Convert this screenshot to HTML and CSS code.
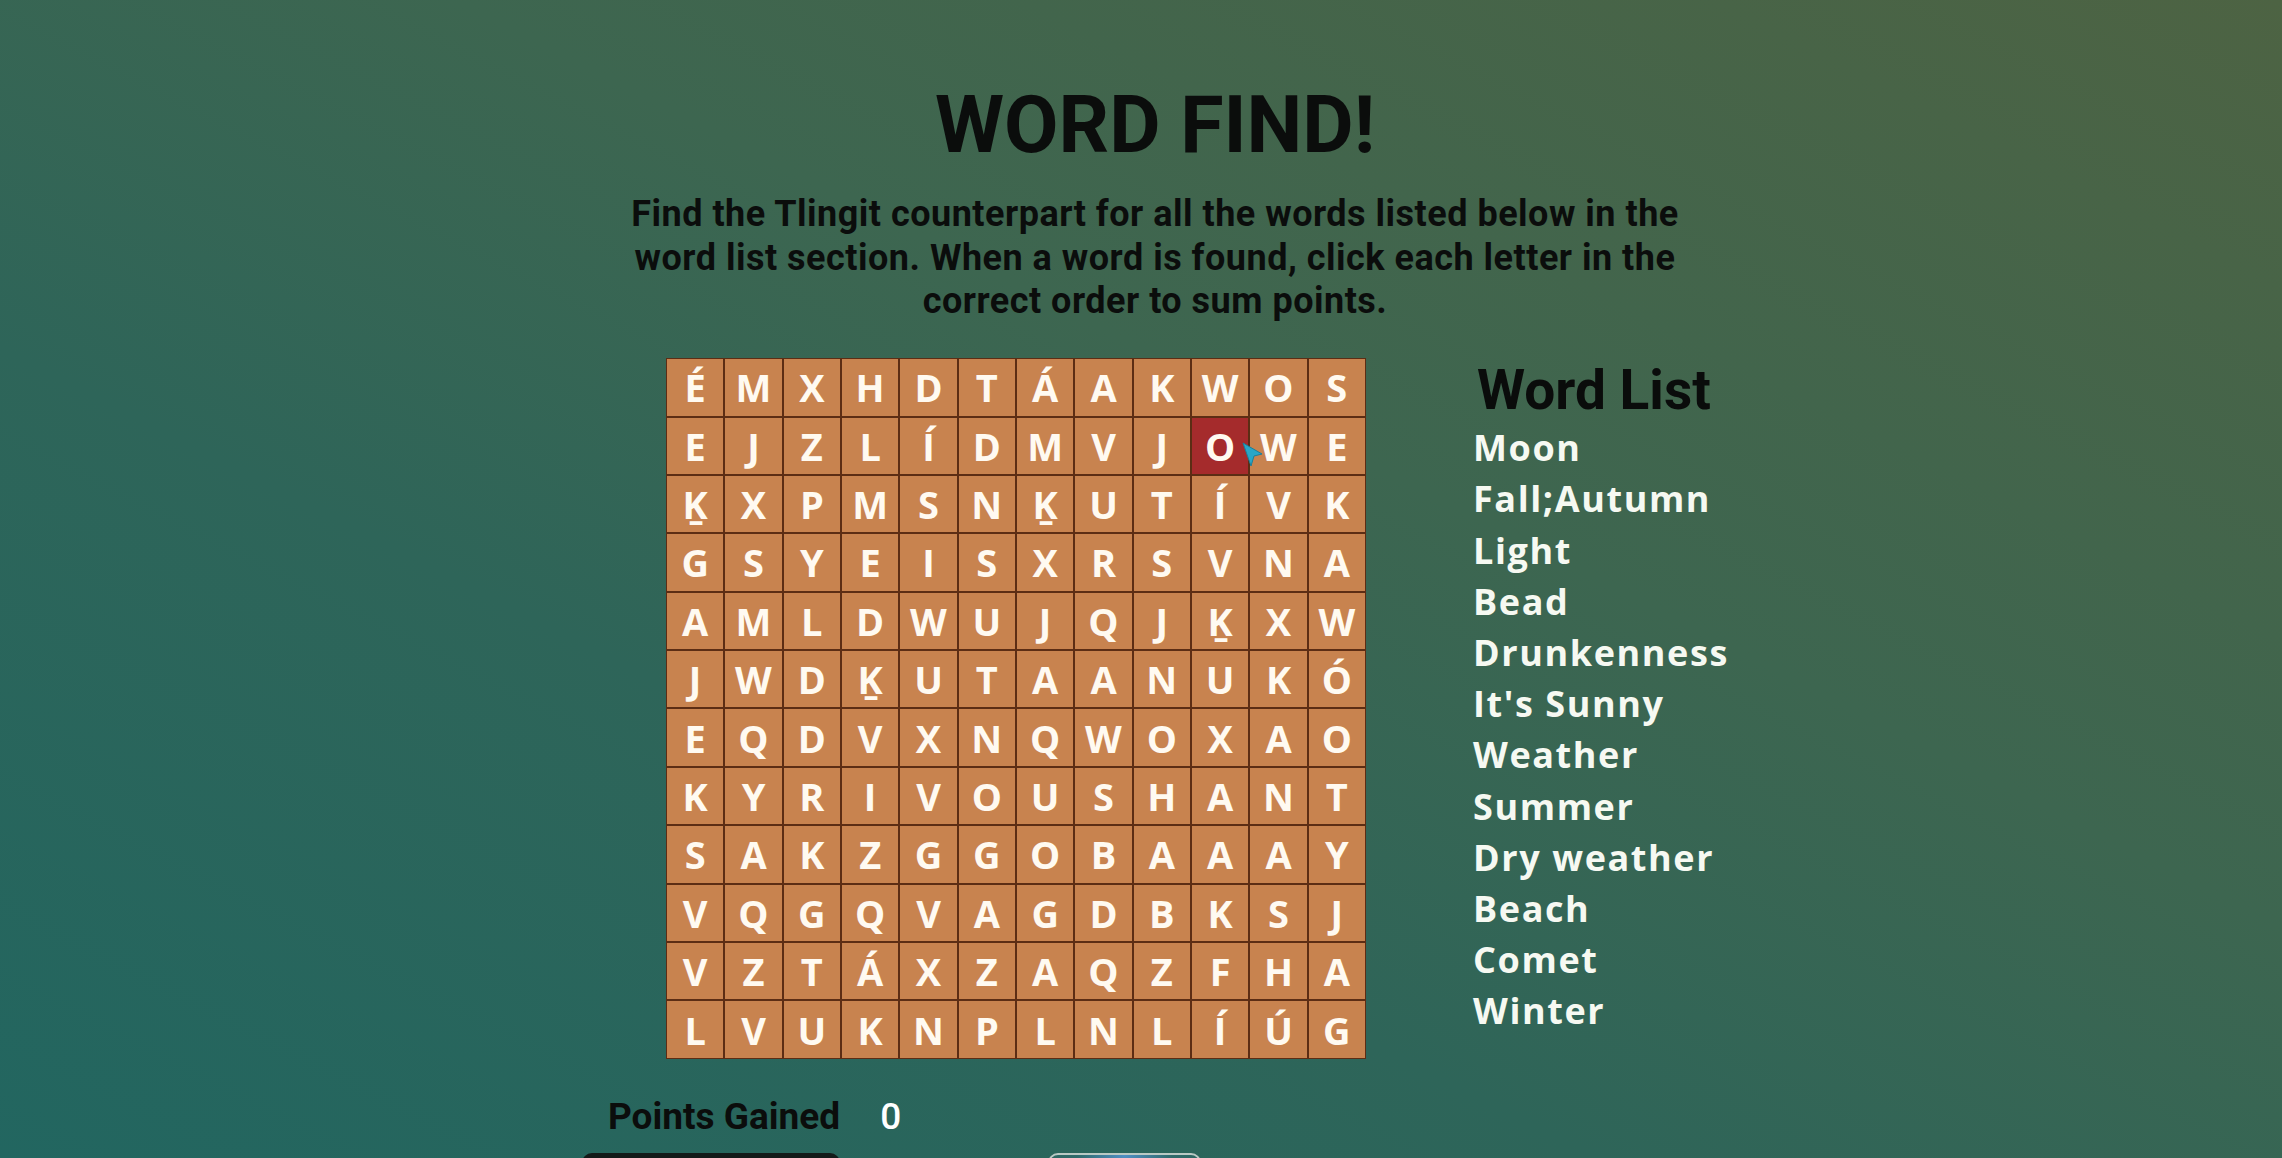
FILE: index.html
```html
<!DOCTYPE html>
<html lang="en">
<head>
<meta charset="utf-8">
<title>Word Find</title>
<link rel="stylesheet" href="styles.css">
</head>
<body>
<main class="page">
  <header class="head">
    <h1 class="title">WORD FIND!</h1>
    <p class="intro">Find the Tlingit counterpart for all the words listed below in the word list section. When a word is found, click each letter in the correct order to sum points.</p>
  </header>

  <section class="board">
    <div class="grid-wrap">
      <div class="grid">
        <span class="cell">É</span><span class="cell">M</span><span class="cell">X</span><span class="cell">H</span><span class="cell">D</span><span class="cell">T</span><span class="cell">Á</span><span class="cell">A</span><span class="cell">K</span><span class="cell">W</span><span class="cell">O</span><span class="cell">S</span>
        <span class="cell">E</span><span class="cell">J</span><span class="cell">Z</span><span class="cell">L</span><span class="cell">Í</span><span class="cell">D</span><span class="cell">M</span><span class="cell">V</span><span class="cell">J</span><span class="cell selected">O</span><span class="cell">W</span><span class="cell">E</span>
        <span class="cell">Ḵ</span><span class="cell">X</span><span class="cell">P</span><span class="cell">M</span><span class="cell">S</span><span class="cell">N</span><span class="cell">Ḵ</span><span class="cell">U</span><span class="cell">T</span><span class="cell">Í</span><span class="cell">V</span><span class="cell">K</span>
        <span class="cell">G</span><span class="cell">S</span><span class="cell">Y</span><span class="cell">E</span><span class="cell">I</span><span class="cell">S</span><span class="cell">X</span><span class="cell">R</span><span class="cell">S</span><span class="cell">V</span><span class="cell">N</span><span class="cell">A</span>
        <span class="cell">A</span><span class="cell">M</span><span class="cell">L</span><span class="cell">D</span><span class="cell">W</span><span class="cell">U</span><span class="cell">J</span><span class="cell">Q</span><span class="cell">J</span><span class="cell">Ḵ</span><span class="cell">X</span><span class="cell">W</span>
        <span class="cell">J</span><span class="cell">W</span><span class="cell">D</span><span class="cell">Ḵ</span><span class="cell">U</span><span class="cell">T</span><span class="cell">A</span><span class="cell">A</span><span class="cell">N</span><span class="cell">U</span><span class="cell">K</span><span class="cell">Ó</span>
        <span class="cell">E</span><span class="cell">Q</span><span class="cell">D</span><span class="cell">V</span><span class="cell">X</span><span class="cell">N</span><span class="cell">Q</span><span class="cell">W</span><span class="cell">O</span><span class="cell">X</span><span class="cell">A</span><span class="cell">O</span>
        <span class="cell">K</span><span class="cell">Y</span><span class="cell">R</span><span class="cell">I</span><span class="cell">V</span><span class="cell">O</span><span class="cell">U</span><span class="cell">S</span><span class="cell">H</span><span class="cell">A</span><span class="cell">N</span><span class="cell">T</span>
        <span class="cell">S</span><span class="cell">A</span><span class="cell">K</span><span class="cell">Z</span><span class="cell">G</span><span class="cell">G</span><span class="cell">O</span><span class="cell">B</span><span class="cell">A</span><span class="cell">A</span><span class="cell">A</span><span class="cell">Y</span>
        <span class="cell">V</span><span class="cell">Q</span><span class="cell">G</span><span class="cell">Q</span><span class="cell">V</span><span class="cell">A</span><span class="cell">G</span><span class="cell">D</span><span class="cell">B</span><span class="cell">K</span><span class="cell">S</span><span class="cell">J</span>
        <span class="cell">V</span><span class="cell">Z</span><span class="cell">T</span><span class="cell">Á</span><span class="cell">X</span><span class="cell">Z</span><span class="cell">A</span><span class="cell">Q</span><span class="cell">Z</span><span class="cell">F</span><span class="cell">H</span><span class="cell">A</span>
        <span class="cell">L</span><span class="cell">V</span><span class="cell">U</span><span class="cell">K</span><span class="cell">N</span><span class="cell">P</span><span class="cell">L</span><span class="cell">N</span><span class="cell">L</span><span class="cell">Í</span><span class="cell">Ú</span><span class="cell">G</span>
      </div>
      <svg class="cursor" width="22" height="26" viewBox="0 0 22 26" aria-hidden="true">
        <polygon points="1,1 20,12 12,14 9,24" fill="#2aa6c6" stroke="#1b7f9b" stroke-width="1" stroke-linejoin="round"/>
      </svg>
    </div>

    <aside class="words">
      <h2 class="words-title">Word List</h2>
      <ul class="word-items">
        <li>Moon</li>
        <li>Fall;Autumn</li>
        <li>Light</li>
        <li>Bead</li>
        <li>Drunkenness</li>
        <li>It's Sunny</li>
        <li>Weather</li>
        <li>Summer</li>
        <li>Dry weather</li>
        <li>Beach</li>
        <li>Comet</li>
        <li>Winter</li>
      </ul>
    </aside>
  </section>

  <div class="points">
    <span class="points-label">Points Gained</span>
    <span class="points-value">0</span>
  </div>

  <div class="actions">
    <button class="btn btn-dark" type="button"></button>
    <button class="btn btn-outline" type="button"></button>
  </div>
</main>
</body>
</html>
```

FILE: styles.css
```css
html, body {
  margin: 0;
  padding: 0;
  height: 100%;
}

body {
  width: 2282px;
  height: 1158px;
  overflow: hidden;
  background: linear-gradient(to top right, #226660 0%, #2e6559 35%, #3d6650 60%, #4d6343 100%);
  font-family: Roboto, "Liberation Sans", sans-serif;
}

.page {
  display: flex;
  flex-direction: column;
}

.head {
  padding-left: 28px;
  text-align: center;
}

.title {
  margin: 79px 0 0;
  font-family: Roboto, "Liberation Sans", sans-serif;
  font-weight: 700;
  font-size: 79px;
  line-height: normal;
  color: #0b0d0c;
}

.intro {
  width: 1065px;
  margin: 22px auto 0;
  font-family: Roboto, "Liberation Sans", sans-serif;
  font-weight: 700;
  font-size: 36px;
  letter-spacing: 0.5px;
  line-height: 43.7px;
  color: #0b0d0c;
}

.board {
  display: flex;
  align-items: flex-start;
  margin: 34px 0 0 666px;
  gap: 107px;
}

.grid-wrap {
  position: relative;
}

.grid {
  display: grid;
  grid-template-columns: repeat(12, 1fr);
  grid-auto-rows: 56.4px;
  gap: 2px;
  width: 700px;
  box-sizing: border-box;
  padding: 1px;
  background: #5c2d14;
}

.cell {
  display: flex;
  align-items: center;
  justify-content: center;
  background: #c8834f;
  color: #fffaf1;
  font-family: "Open Sans", "Noto Sans", sans-serif;
  font-weight: 700;
  font-size: 38px;
  line-height: 1;
}

.cell.selected {
  background: #a52b2c;
}

.cursor {
  position: absolute;
  left: 576px;
  top: 84px;
}

.words {
  display: flex;
  flex-direction: column;
}

.words-title {
  margin: 0;
  padding-left: 4px;
  font-family: Roboto, "Liberation Sans", sans-serif;
  font-weight: 700;
  font-size: 55px;
  line-height: normal;
  color: #0a0c0b;
}

.word-items {
  list-style: none;
  margin: 0;
  padding: 0;
}

.word-items li {
  font-family: "Open Sans", "Noto Sans", sans-serif;
  font-weight: 700;
  font-size: 36px;
  line-height: 51.2px;
  letter-spacing: 1.6px;
  color: #f6f9f2;
}

.points {
  display: flex;
  align-items: baseline;
  gap: 40px;
  margin: 36px 0 0 608px;
  font-family: Roboto, "Liberation Sans", sans-serif;
  font-weight: 700;
  font-size: 37px;
  line-height: normal;
}

.points-label {
  color: #0b0d0c;
}

.points-value {
  color: #ffffff;
  font-weight: 500;
}

.actions {
  display: flex;
  gap: 208px;
  margin: 15px 0 0 582px;
}

.btn {
  height: 60px;
  border-radius: 10px;
  padding: 0;
  margin: 0;
}

.btn-dark {
  width: 258px;
  background: #141a19;
  border: none;
}

.btn-outline {
  width: 153px;
  background: radial-gradient(ellipse at 50% 0%, #4f8fc4 0%, #2f6a6a 45%, #2c6458 100%);
  border: 2px solid #b9c9c4;
}
```
